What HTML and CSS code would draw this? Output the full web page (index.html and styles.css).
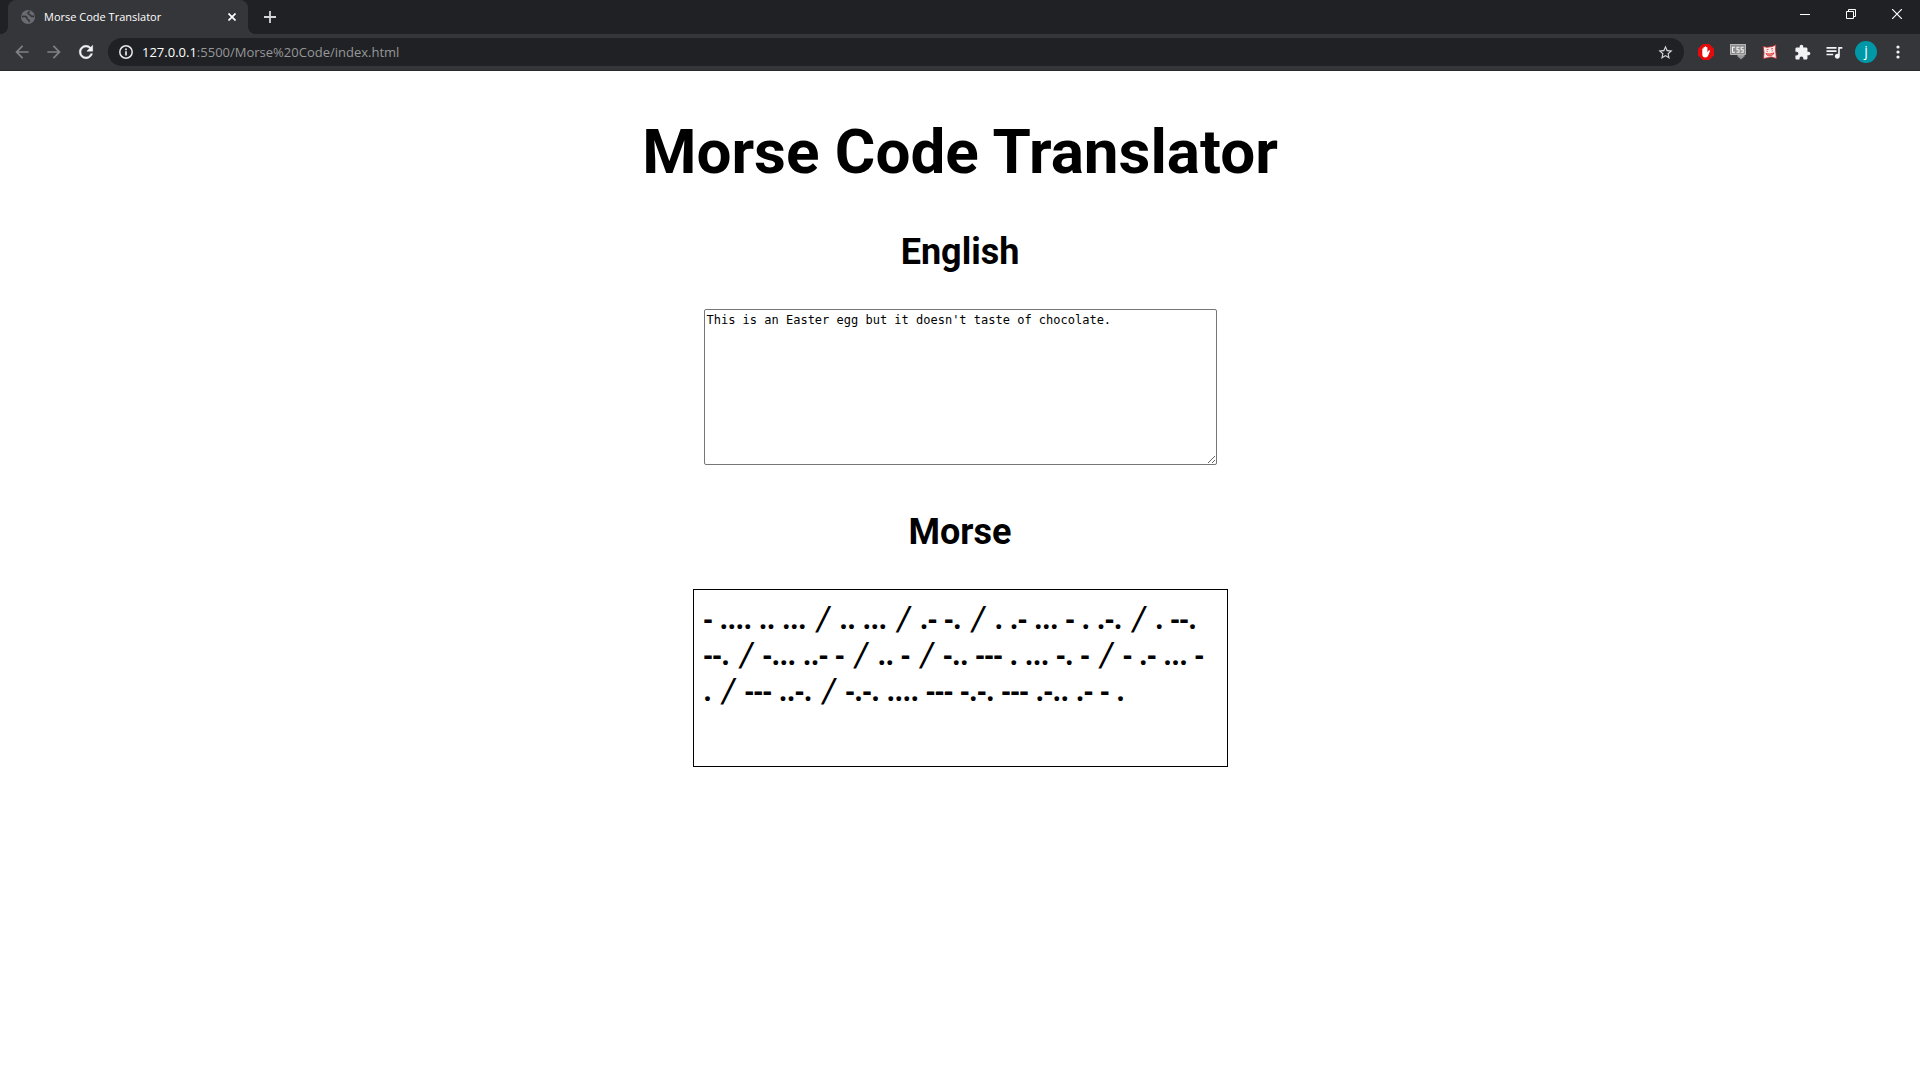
FILE: index.html
```html
<!DOCTYPE html>
<html lang="en">
<head>
<meta charset="utf-8">
<title>Morse Code Translator</title>
<link rel="stylesheet" href="styles.css">
</head>
<body>
<header class="browser">
  <div class="tabstrip">
    <div class="tab">
      <svg class="favicon" viewBox="0 0 16 16" width="16" height="16"><circle cx="8" cy="8" r="7" fill="#686b70"/><path d="M1.800 7.600c2.600-.4 4.400-.2 5 .9.6 1.300-.6 1.600 1.600 2.300 1.200.4.900 1.300.4 2.200M9.800 2.400c-2.200.8-2.400 2.400-.8 2.800 1.600.3 1.200 1.900 2.800 2.200h2.400" fill="none" stroke="#35363a" stroke-width="1.600"/></svg>
      <span class="tab-title">Morse Code Translator</span>
      <button class="tab-close" aria-label="Close tab"><svg viewBox="0 0 8 8" width="8" height="8"><path d="M.5.5l7 7M7.500.5l-7 7" stroke="#fff" stroke-width="1.700"/></svg></button>
    </div>
    <button class="new-tab" aria-label="New tab"><svg viewBox="0 0 12 12" width="12" height="12"><path d="M6 0v12M0 6h12" stroke="#d5d6d8" stroke-width="1.800"/></svg></button>
    <div class="window-controls">
      <button aria-label="Minimize"><svg viewBox="0 0 10 10" width="10" height="10"><path d="M0 5.500h10" stroke="#fff"/></svg></button>
      <button aria-label="Restore"><svg viewBox="0 0 10 10" width="10" height="10"><path d="M.5 2.500h7v7h-7zM2.500 2.500v-2h7v7h-2" fill="none" stroke="#fff"/></svg></button>
      <button aria-label="Close"><svg viewBox="0 0 10 10" width="10" height="10"><path d="M0 0l10 10M10 0L0 10" stroke="#fff" stroke-width="1.200"/></svg></button>
    </div>
  </div>
  <div class="toolbar">
    <button class="tool dim" aria-label="Back"><svg viewBox="0 0 24 24" width="20" height="20"><path d="M20 11H7.830l5.590-5.590L12 4l-8 8 8 8 1.410-1.410L7.830 13H20v-2z"/></svg></button>
    <button class="tool dim" aria-label="Forward"><svg viewBox="0 0 24 24" width="20" height="20"><path d="M4 11h12.170l-5.590-5.590L12 4l8 8-8 8-1.410-1.410L16.170 13H4v-2z"/></svg></button>
    <button class="tool" aria-label="Reload"><svg viewBox="0 0 24 24" width="20" height="20"><path d="M17.650 6.350C16.200 4.900 14.210 4 12 4c-4.420 0-7.990 3.580-7.990 8s3.570 8 7.990 8c3.730 0 6.840-2.550 7.730-6h-2.080c-.82 2.330-3.040 4-5.650 4-3.310 0-6-2.690-6-6s2.690-6 6-6c1.660 0 3.140.69 4.220 1.780L13 11h7V4l-2.350 2.350z" stroke="#f1f3f4" stroke-width=".6"/></svg></button>
    <div class="omnibox">
      <svg viewBox="0 0 16 16" width="16" height="16"><circle cx="8" cy="8" r="6.200" fill="none" stroke="#e8eaed" stroke-width="1.500"/><path d="M8 4.500v1.700M8 7.300v4.200" stroke="#e8eaed" stroke-width="1.700"/></svg>
      <a class="url" href="#"><span class="host">127.0.0.1</span>:5500/Morse%20Code/index.html</a>
      <button class="star" aria-label="Bookmark"><svg viewBox="0 0 24 24" width="17" height="17"><path fill="#d5d6d8" d="M22 9.240l-7.190-.62L12 2 9.190 8.630 2 9.240l5.460 4.730L5.820 21 12 17.270 18.180 21l-1.630-7.030L22 9.240zM12 15.400l-3.760 2.270 1-4.280-3.320-2.880 4.380-.38L12 6.100l1.710 4.040 4.380.38-3.320 2.880 1 4.280L12 15.400z"/></svg></button>
    </div>
    <button class="tool" aria-label="Ad blocker"><svg viewBox="0 0 16 16" width="16" height="16"><path d="M4.700 0h6.600L16 4.700v6.600L11.300 16H4.700L0 11.300V4.700z" fill="#e30b0b"/><path d="M4.300 8.200V5c0-.9 1.200-.9 1.200 0V3.600c0-.9 1.300-.9 1.300 0V2.800c0-.9 1.300-.9 1.300 0v.8c0-.9 1.300-.9 1.300 0v4.600l1.100-1.500c.6-.8 1.800-.3 1.400.6l-1.700 4.200c-.5 1.300-1.400 2-2.900 2-2 0-3-1.200-3-3z" fill="#fff"/></svg></button>
    <button class="tool" aria-label="CSS viewer"><svg viewBox="0 0 16 16" width="16" height="16"><path d="M0 0h16v10.500h-2l1 1.500-4 3.500L7 12l1-1.500H0z" fill="#909090"/><path d="M.5.500h15v10H.5z" fill="#8c8c8c" stroke="#b4b4b4"/><path d="M5 3.200H2.500v5H5M9.500 3.200H7v2.500h2v2.500H6.500M13.700 3.200h-2.500v2.500h2v2.500h-2.500" fill="none" stroke="#f4f4f4" stroke-width="1.100"/><path d="M8.500 11.500h5M9.500 13h3" stroke="#b0b0b0" stroke-dasharray="1 1"/></svg></button>
    <button class="tool" aria-label="Cat extension"><svg viewBox="0 0 16 16" width="16" height="16"><path d="M1.200 2.500l3.800.8 5.500-.8L13.800.8l-.3 4.200.9 9.500-4.900-1.500-8 1.500.5-6z" fill="#fbeaea" stroke="#c62828" stroke-width=".8"/><path d="M4.600 5.800l1.900-.5M9 5l2-.5M5.200 7v1M10.300 6.300v1M4 9.600c2.500.8 6 .3 7.800-.8-.3 1.800-1.500 2.800-3.600 3-2.200.3-3.600-.6-4.200-2.200z" fill="#ee9a9a" stroke="#d22" stroke-width=".8"/></svg></button>
    <button class="tool" aria-label="Extensions"><svg viewBox="0 0 24 24" width="17" height="17"><path d="M20.500 11H19V7c0-1.100-.9-2-2-2h-4V3.500C13 2.120 11.880 1 10.500 1S8 2.120 8 3.500V5H4c-1.100 0-1.990.9-1.990 2v3.800H3.500c1.490 0 2.700 1.210 2.700 2.700s-1.210 2.700-2.700 2.700H2V20c0 1.100.9 2 2 2h3.800v-1.500c0-1.490 1.210-2.700 2.700-2.700 1.490 0 2.700 1.210 2.700 2.700V22H17c1.100 0 2-.9 2-2v-4h1.500c1.380 0 2.500-1.120 2.500-2.500S21.880 11 20.500 11z"/></svg></button>
    <button class="tool" aria-label="Media"><svg viewBox="0 0 24 24" width="20" height="20"><path d="M15 6H3v2h12V6zm0 4H3v2h12v-2zM3 16h8v-2H3v2zM17 6v8.180c-.31-.11-.65-.18-1-.18-1.660 0-3 1.340-3 3s1.340 3 3 3 3-1.340 3-3V8h3V6h-5z"/></svg></button>
    <button class="tool" aria-label="Profile"><span class="avatar">j</span></button>
    <button class="tool" aria-label="Menu"><svg viewBox="0 0 4 14" width="4" height="14"><circle cx="2" cy="2" r="1.600"/><circle cx="2" cy="7" r="1.600"/><circle cx="2" cy="12" r="1.600"/></svg></button>
  </div>
</header>
<main class="page">
  <h1>Morse Code Translator</h1>
  <h2><label for="english">English</label></h2>
  <textarea class="english" id="english" spellcheck="false">This is an Easter egg but it doesn't taste of chocolate.</textarea>
  <h2>Morse</h2>
  <div class="morse">- .... .. ... <i>/</i> .. ... <i>/</i> .- -. <i>/</i> . .- ... - . .-. <i>/</i> . --.<br>--. <i>/</i> -... ..- - <i>/</i> .. - <i>/</i> -.. --- . ... -. - <i>/</i> - .- ... -<br>. <i>/</i> --- ..-. <i>/</i> -.-. .... --- -.-. --- .-.. .- - .</div>
</main>
</body>
</html>
```
FILE: styles.css
```css
* { box-sizing: border-box; }
body {
  margin: 0;
  background: #fff;
  color: #000;
  font-family: Roboto, "Liberation Sans", sans-serif;
}
button {
  display: flex;
  align-items: center;
  justify-content: center;
  padding: 0;
  border: 0;
  background: none;
}

/* Browser frame */
.browser {
  background: #202124;
  color: #fff;
  font-family: "Open Sans", sans-serif;
}
.tabstrip {
  display: flex;
  height: 34px;
  padding-left: 8px;
}
.tab {
  position: relative;
  display: flex;
  align-items: center;
  gap: 8px;
  width: 240px;
  padding: 0 12px;
  border-radius: 8px 8px 0 0;
  background: #35363a;
}
.tab::before,
.tab::after {
  content: "";
  position: absolute;
  bottom: 0;
  width: 8px;
  height: 8px;
}
.tab::before {
  right: 100%;
  background: radial-gradient(circle at 0 0, #202124 8px, #35363a 8px);
}
.tab::after {
  left: 100%;
  background: radial-gradient(circle at 100% 0, #202124 8px, #35363a 8px);
}
.tab-title {
  flex: 1;
  font-size: 11px;
  line-height: 16px;
  white-space: nowrap;
}
.new-tab { width: 44px; }
.window-controls {
  display: flex;
  height: 28px;
  margin-left: auto;
}
.window-controls button { width: 46px; }
.toolbar {
  display: flex;
  align-items: center;
  height: 37px;
  padding: 0 6px;
  border-bottom: 1px solid #28292c;
  background: #35363a;
}
.tool {
  flex: none;
  width: 32px;
  height: 28px;
  fill: #f1f3f4;
}
.dim { fill: #808184; }
.omnibox {
  display: flex;
  flex: 1;
  align-items: center;
  gap: 8px;
  height: 28px;
  margin: 0 6px;
  padding: 0 10px;
  border-radius: 14px;
  background: #202124;
}
.url {
  flex: 1;
  color: #969799;
  font-size: 13px;
  line-height: 20px;
  text-decoration: none;
}
.host { color: #fff; }
.avatar {
  width: 22px;
  height: 22px;
  border-radius: 50%;
  background: #0097a7;
  color: #fff;
  font: 14px/20px "Open Sans", sans-serif;
}

/* Translator */
.page {
  display: flex;
  flex-direction: column;
  align-items: center;
  padding-top: 41px;
}
h1, h2 { margin: 0; font-weight: bold; }
h1 { margin-bottom: 36px; font-size: 62px; line-height: 80px; }
h2 { margin-bottom: 33px; font-size: 36px; line-height: 48px; }
.english {
  width: 513px;
  height: 156px;
  margin-bottom: 43px;
  padding: 2px;
  border: 1px solid #767676;
  border-radius: 2px;
  font: 12px/16px "DejaVu Sans Mono", monospace;
}
.morse {
  width: 535px;
  min-height: 178px;
  padding: 10px;
  border: 1px solid #000;
  font: bold 28px/36px "Open Sans", sans-serif;
  white-space: nowrap;
}
.morse i {
  margin: 0 4px;
  font: italic 32px/32px "DejaVu Sans", sans-serif;
}
```
